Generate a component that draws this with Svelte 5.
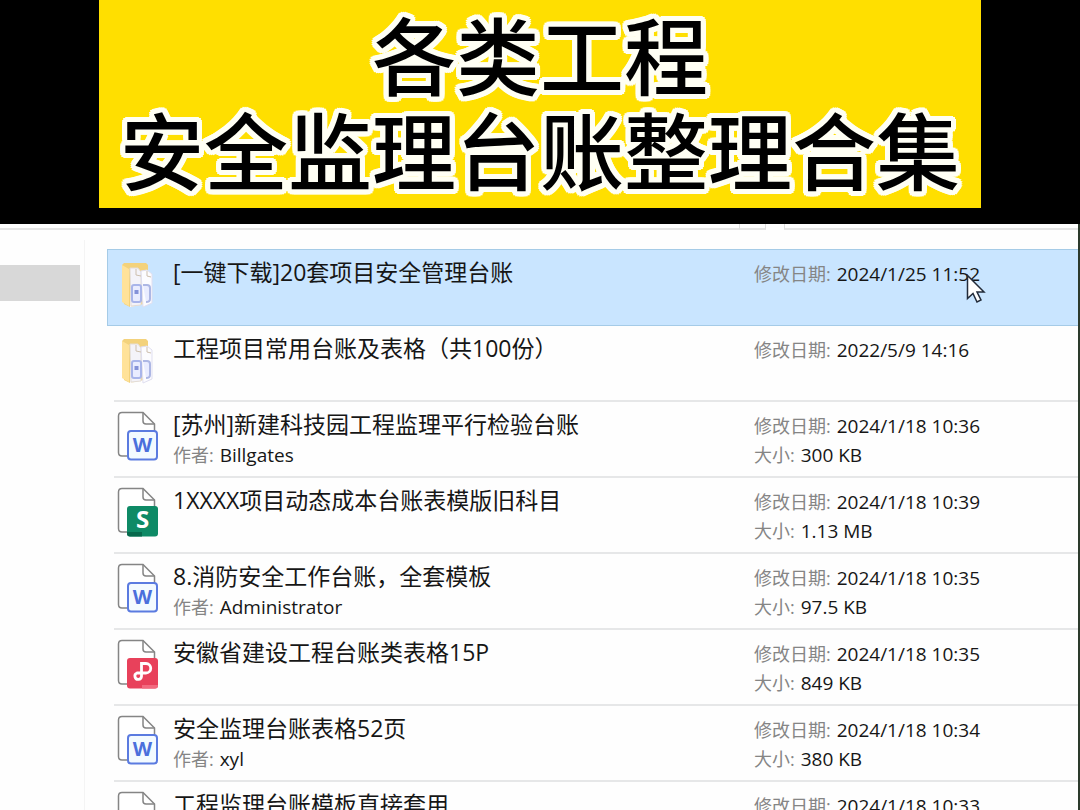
<script lang="ts">
	interface FileItem {
		type: 'folder' | 'word' | 'sheet' | 'pdf';
		name: string;
		modified: string;
		author?: string;
		size?: string;
	}

	const items: FileItem[] = [
		{type: 'folder', name: '[一键下载]20套项目安全管理台账', modified: '2024/1/25 11:52'},
		{type: 'folder', name: '工程项目常用台账及表格（共100份）', modified: '2022/5/9 14:16'},
		{type: 'word', name: '[苏州]新建科技园工程监理平行检验台账', modified: '2024/1/18 10:36', author: 'Billgates', size: '300 KB'},
		{type: 'sheet', name: '1XXXX项目动态成本台账表模版旧科目', modified: '2024/1/18 10:39', size: '1.13 MB'},
		{type: 'word', name: '8.消防安全工作台账，全套模板', modified: '2024/1/18 10:35', author: 'Administrator', size: '97.5 KB'},
		{type: 'pdf', name: '安徽省建设工程台账类表格15P', modified: '2024/1/18 10:35', size: '849 KB'},
		{type: 'word', name: '安全监理台账表格52页', modified: '2024/1/18 10:34', author: 'xyl', size: '380 KB'},
		{type: 'word', name: '工程监理台账模板直接套用', modified: '2024/1/18 10:33'},
	];

	let selected = 0;

	const select = (i: number) => (e: MouseEvent) => {
		e.preventDefault();
		selected = i;
	};
</script>

<div class="page">
	<header>
		<h1>各类工程<br />安全监理台账整理合集</h1>
	</header>

	<div class="window">
		<div class="toolbar">
			<div class="address"></div>
			<div class="refresh"></div>
			<div class="search"></div>
		</div>
		<div class="body">
			<nav><div class="current"></div></nav>
			<ul>
				{#each items as item, i (item)}
					<li class:selected={i === selected}>
						<a href="#file" on:click={select(i)}>
							<svg class="icon" viewBox="0 0 42 52" aria-hidden="true">
								{#if item.type === 'folder'}
									<path d="M5 6l2-2h22l2 2v38l-18 4-6-3z" fill="#f3d27c" />
									<path d="M5 6l7 4v37l-7-4z" fill="#ffe299" />
									<path d="M13 9l9 3 1 34-10 2z" fill="#fbfaff" />
									<path d="M13 9h8l3 4v33l-10 1z" fill="#f4f3f9" stroke="#e3dcd5" />
									<path d="M24 12l6-1 5 4v29l-9 4z" fill="#fcfcff" stroke="#e0dff0" />
									<path d="M19 10v6l5 1M30 12v5l4 1" fill="none" stroke="#cdbfae" />
									<rect x="15" y="26" width="9" height="17" rx="2" fill="#e9ecff" stroke="#a9b5ea" stroke-width="2" />
									<path d="M26 26h4q3 0 3 3v11q0 3-4 3" fill="#e9ecff" stroke="#adb7e4" stroke-width="2" />
									<path d="M17.500 31h4v4h-4z" fill="#8592d8" />
								{:else}
									<path d="M11 45H5q-3.500 0-3.500-3.500V5Q1.500 1.500 5 1.500h21L37.500 13v8" fill="#fff" stroke="#858585" stroke-width="1.500" />
									<path d="M26 1.500v8.500q0 3 3 3h8.500" fill="none" stroke="#858585" stroke-width="1.500" />
									{#if item.type === 'word'}
										<rect x="11" y="20" width="29" height="28.500" rx="3" fill="#f3faff" stroke="#5b7be0" stroke-width="2" />
										<text x="25.500" y="41" fill="#4b6fdc">W</text>
									{:else if item.type === 'sheet'}
										<rect x="10" y="19" width="31" height="30.500" rx="3" fill="#0e8a66" />
										<path d="M10 45h15v4.500H13q-3 0-3-3z" fill="#07694c" />
										<text x="25.500" y="41" class="big" fill="#fff">S</text>
									{:else}
										<rect x="10" y="19" width="31" height="30.500" rx="3" fill="#e8415b" />
										<path d="M25 46h16q0 3.500-3 3.500H25z" fill="#f26a7f" />
										<path d="M24.500 31v-6.500H29a4.700 4.700 0 0 1 0 9.500h-9a3.300 3.300 0 1 0 4.500 3.300V31" fill="none" stroke="#fff" stroke-width="2.800" />
									{/if}
								{/if}
							</svg>
							<div class="info">
								<div class="name">{item.name}</div>
								{#if item.author}
									<div class="meta"><span>作者:</span> {item.author}</div>
								{/if}
							</div>
							<div class="details">
								<div class="meta">
									<span>修改日期:</span> {item.modified}
									{#if i === 0}
										<svg class="cursor" viewBox="0 0 20 30" aria-hidden="true">
											<path d="M1.500 1.500v23l5.500-5 4 8.500 4-2-4-8h7z" fill="#fff" stroke="#222b3a" stroke-width="1.500" />
										</svg>
									{/if}
								</div>
								{#if item.size}
									<div class="meta"><span>大小:</span> {item.size}</div>
								{/if}
							</div>
						</a>
					</li>
				{/each}
			</ul>
		</div>
	</div>
</div>

<style>
	:global(body) {
		background: #000;
	}
	.page {
		height: 100vh;
		overflow: hidden;
		display: flex;
		flex-direction: column;
		font-family: 'Open Sans', 'Noto Sans CJK SC', sans-serif;
	}
	header {
		flex: none;
		display: flex;
		justify-content: center;
		padding-bottom: 16px;
		background: #000;
	}
	/* ring of shadows = outline with round corners */
	h1 {
		--o: #fffff4;
		box-sizing: border-box;
		width: 81.6%;
		margin: 0;
		padding: 5px 0 13px;
		background: #ffdf00;
		color: #000;
		font-family: 'Noto Sans CJK SC', sans-serif;
		font-size: 84px;
		font-weight: 500;
		line-height: 95px;
		text-align: center;
		white-space: nowrap;
		text-shadow:
			5px 0 var(--o),
			5px 2px var(--o),
			4px 4px var(--o),
			2px 5px var(--o),
			0 5px var(--o),
			-2px 5px var(--o),
			-4px 4px var(--o),
			-5px 2px var(--o),
			-5px 0 var(--o),
			-5px -2px var(--o),
			-4px -4px var(--o),
			-2px -5px var(--o),
			0 -5px var(--o),
			2px -5px var(--o),
			4px -4px var(--o),
			5px -2px var(--o);
	}
	.window {
		flex: 1;
		min-height: 0;
		display: flex;
		flex-direction: column;
		overflow: hidden;
		background: #fefefe;
		border-right: 2px solid #2c3a2c;
	}
	.toolbar {
		flex: none;
		display: flex;
		height: 6px;
	}
	.toolbar div {
		box-sizing: border-box;
		border-bottom: 2px solid #e4e4e4;
	}
	.address {
		flex: 1;
	}
	.toolbar .refresh {
		width: 27px;
		margin-right: 18px;
		border-left: 1px solid #dcdcdc;
		border-right: 1px solid #dcdcdc;
	}
	.toolbar .search {
		width: 294px;
		border-left: 1px solid #dcdcdc;
	}
	.body {
		flex: 1;
		min-height: 0;
		display: flex;
	}
	nav {
		flex: none;
		box-sizing: border-box;
		width: 85px;
		margin-top: 10px;
		padding: 25px 4px 0 0;
		border-right: 1px solid #f4f4f4;
	}
	.current {
		height: 36px;
		background: #d8d8d8;
	}
	ul {
		flex: 1;
		min-width: 0;
		margin: 0;
		padding: 19px 0 0 22px;
		list-style: none;
	}
	li {
		box-sizing: border-box;
		height: 76px;
		padding-left: 6px;
		border-left: 1px solid transparent;
	}
	li.selected {
		height: 77px;
		background: #c9e5ff;
		border: solid #a5cbe7;
		border-width: 1px 0 1px 1px;
	}
	a {
		box-sizing: border-box;
		display: flex;
		height: 100%;
		padding-top: 9px;
		border-bottom: 2px solid #e6e7e8;
		color: #161616;
		text-decoration: none;
	}
	.selected a {
		border-bottom: none;
	}
	.icon {
		flex: none;
		width: 42px;
		height: 52px;
		margin-left: 3px;
		margin-right: 14px;
	}
	.icon text {
		font-size: 20px;
		font-weight: 700;
		text-anchor: middle;
	}
	.icon .big {
		font-size: 24px;
	}
	.info {
		flex: 1;
		min-width: 0;
	}
	.name,
	.meta {
		white-space: nowrap;
	}
	.name {
		margin-bottom: 3px;
		font-size: 23px;
		line-height: 27px;
	}
	.meta {
		position: relative;
		font-size: 19px;
		line-height: 29px;
	}
	.meta span {
		margin-right: 1px;
		color: #858585;
		font-size: 18px;
	}
	.details {
		width: 324px;
		padding-top: 1px;
	}
	.cursor {
		position: absolute;
		left: 212px;
		top: 14px;
		width: 20px;
		height: 30px;
	}
</style>
